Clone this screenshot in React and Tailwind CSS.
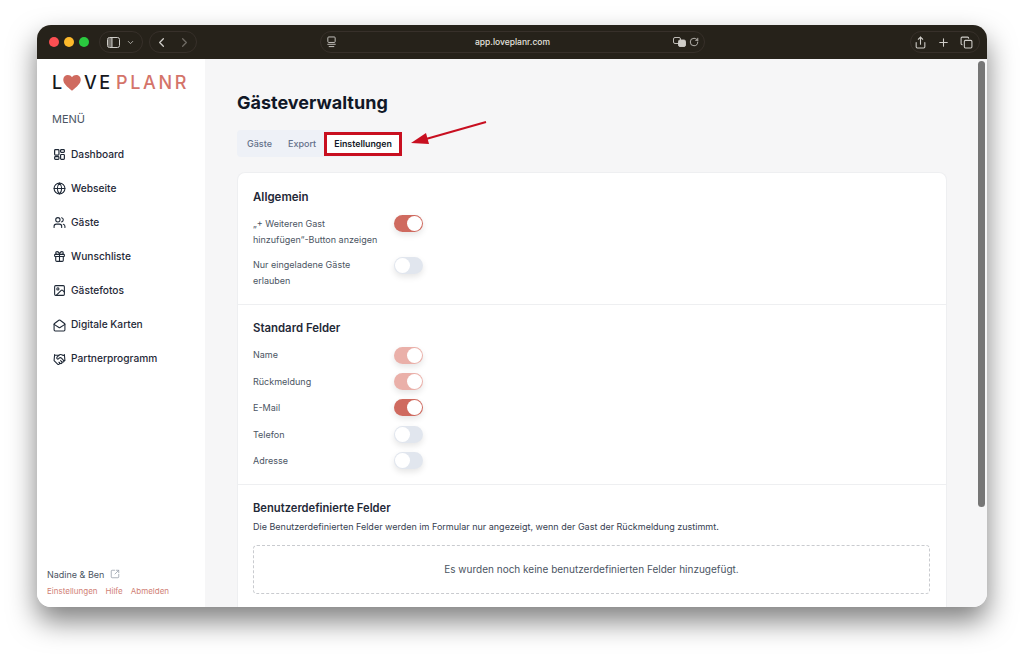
import { Globe, Users, Gift, Image, MailOpen, Handshake, ChevronDown, ChevronLeft, ChevronRight, Share, Plus, Copy, RotateCw, SquareArrowOutUpRight } from 'lucide-react';

function DashIcon() {
  return (
    <svg width="13" height="13" viewBox="0 0 24 24" fill="none" stroke="currentColor" strokeWidth="2.2">
      <rect x="3" y="3" width="8" height="10" rx="1.5" />
      <rect x="14" y="3" width="7" height="5" rx="1.5" />
      <rect x="14" y="12" width="7" height="9" rx="1.5" />
      <rect x="3" y="16" width="8" height="5" rx="1.5" />
    </svg>
  );
}

function SidebarIcon() {
  return (
    <svg width="13" height="11" viewBox="0 0 13 11" fill="none" stroke="currentColor" strokeWidth="1">
      <rect x="0.5" y="0.5" width="12" height="10" rx="2" />
      <path d="M1 2.500Q1 1 2.500 1H5V10H2.500Q1 10 1 8.500Z" fill="currentColor" fillOpacity="0.45" stroke="none" />
      <path d="M5 0.500V10.500" />
    </svg>
  );
}

function TranslateIcon() {
  return (
    <svg width="13" height="11" viewBox="0 0 13 11" fill="none" stroke="currentColor" strokeWidth="0.9">
      <rect x="0.500" y="0.500" width="7" height="6" rx="1.500" />
      <rect x="5.500" y="3" width="7" height="6.500" rx="1.500" fill="currentColor" />
    </svg>
  );
}

const menu = [
  { label: 'Dashboard', icon: <DashIcon /> },
  { label: 'Webseite', icon: <Globe size={13} /> },
  { label: 'Gäste', icon: <Users size={13} /> },
  { label: 'Wunschliste', icon: <Gift size={13} /> },
  { label: 'Gästefotos', icon: <Image size={13} /> },
  { label: 'Digitale Karten', icon: <MailOpen size={13} /> },
  { label: 'Partnerprogramm', icon: <Handshake size={13} /> },
];

function Toggle({ state, className = '' }) {
  const bg = state === 'on' ? 'bg-[#cf6a5f] justify-end' : state === 'locked' ? 'bg-[#eab0a9] justify-end' : 'bg-[#e1e6ee] justify-start';
  return (
    <div className={`w-[29px] h-[17px] rounded-full flex items-center px-px shadow-[0_3px_6px_rgba(0,0,0,0.1)] ${bg} ${className}`}>
      <div className="w-[15px] h-[15px] rounded-full bg-white" />
    </div>
  );
}

function Field({ label, state }) {
  return (
    <div className="flex items-center h-[26.4px]">
      <span className="w-[141px] text-[9px] text-[#4b5563]">{label}</span>
      <Toggle state={state} />
    </div>
  );
}

export default function App() {
  return (
    <div className="w-[1024px] h-[656px] bg-white pl-[37px] pt-[25px] overflow-hidden font-['Inter',sans-serif]">
      <div className="relative w-[950px] h-[582px] rounded-[14px] overflow-hidden flex flex-col shadow-[0_14px_28px_rgba(0,0,0,0.5)]">
        {/* safari toolbar */}
        <div className="h-[34px] shrink-0 bg-[#26221a] flex items-center text-[#cfcdc8] pl-[12px] pr-[7px]">
          <div className="flex gap-[5px]">
            <span className="w-[10px] h-[10px] rounded-full bg-[#fc4f52]" />
            <span className="w-[10px] h-[10px] rounded-full bg-[#fdb92b]" />
            <span className="w-[10px] h-[10px] rounded-full bg-[#2ac93f]" />
          </div>
          <div className="ml-[10px] w-[44px] h-[22px] rounded-full border border-[#37302a] flex items-center justify-center gap-[6px]">
            <SidebarIcon />
            <ChevronDown size={9} />
          </div>
          <div className="ml-[6px] w-[48px] h-[22px] rounded-full border border-[#37302a] flex items-center justify-center gap-[8px]">
            <ChevronLeft size={15} />
            <ChevronRight size={15} className="text-[#6e6a63]" />
          </div>
          <div className="ml-[123px] w-[385px] h-[22px] rounded-full border border-[#37302a] flex items-center px-[5px]">
            <span className="w-[40px]">
              <svg width="11" height="12" viewBox="0 0 12 13" fill="none" stroke="currentColor" strokeWidth="1"><rect x="2" y="1" width="8" height="6" rx="1" /><path d="M1.500 9h9M3 11.500h6" /></svg>
            </span>
            <span className="flex-1 text-center text-[8.500px] font-medium text-[#e5e3df]">app.loveplanr.com</span>
            <span className="w-[40px] flex items-center justify-end gap-[3px]"><TranslateIcon /><RotateCw size={10} /></span>
          </div>
          <div className="ml-auto w-[70px] h-[22px] rounded-full border border-[#37302a] flex items-center justify-center gap-[10px] pr-[3px]">
            <Share size={13} />
            <Plus size={13} />
            <Copy size={13} />
          </div>
        </div>

        <div className="flex flex-1 min-h-0">
          {/* sidebar */}
          <aside className="w-[168px] shrink-0 bg-white flex flex-col pl-[15px]">
            <div className="mt-[14px] h-[20px] flex items-center text-[18px] font-medium tracking-[0.15em] leading-none">
              <span className="text-[#16181d]">L</span>
              <svg width="18" height="16" viewBox="0 0 24 22" className="-ml-[2px] mr-[3px]"><path fill="#cf6a5f" d="M12 21.500C5 16 0 11.500 0 6.500 0 2.800 2.800 0 6.300 0 8.600 0 10.800 1.200 12 3.200 13.200 1.200 15.400 0 17.700 0 21.200 0 24 2.800 24 6.500 24 11.500 19 16 12 21.500Z" /></svg>
              <span className="text-[#16181d]">VE</span>
              <span className="text-[#d4746a] ml-[3px]">PLANR</span>
            </div>
            <div className="mt-[18px] text-[11px] text-[#4b5563]">MENÜ</div>
            <nav className="mt-[10px] flex flex-col">
              {menu.map(m => (
                <div key={m.label} className="h-[34.1px] flex items-center gap-[5px] text-[10.200px] text-[#1f2937] font-medium">
                  <span className="w-[14px] flex justify-center">{m.icon}</span>
                  {m.label}
                </div>
              ))}
            </nav>
            <div className="mt-auto mb-[10px] -ml-[5px]">
              <div className="flex items-center gap-[6px] text-[9px] text-[#4b5563]">
                Nadine & Ben <SquareArrowOutUpRight size={10} className="text-[#9ca3af]" />
              </div>
              <div className="mt-[4px] flex gap-[8px] text-[8px] text-[#d07f76]">
                <span>Einstellungen</span><span>Hilfe</span><span>Abmelden</span>
              </div>
            </div>
          </aside>

          {/* main */}
          <main className="relative flex-1 bg-[#f6f6f7] pl-[32px] pr-[40px] overflow-hidden">
            <h1 className="mt-[32px] text-[18px] leading-[24px] font-bold text-[#111827]">Gästeverwaltung</h1>
            <div className="mt-[15px] w-fit h-[27px] bg-[#eef1f7] rounded-[4px] flex items-center text-[9px] font-medium">
              <span className="pl-[10px] pr-[10px] text-[#64708a]">Gäste</span>
              <span className="px-[6px] text-[#64708a]">Export</span>
              <span className="ml-[2px] w-[78px] h-[24px] flex items-center justify-center bg-white font-semibold text-[8.800px] text-[#111827] border-[3px] border-[#c80f20]">Einstellungen</span>
            </div>
            <div className="mt-[15px] bg-white rounded-t-[8px] border border-[#eeeff1] border-b-0">
              <section className="px-[15px] pt-[16px] pb-[15px] border-b border-[#eeeff1]">
                <h2 className="text-[11.500px] leading-[16px] font-semibold text-[#1f2937]">Allgemein</h2>
                <div className="mt-[11px] flex items-start">
                  <span className="w-[141px] text-[9px] leading-[16px] text-[#4b5563] pr-[12px]">„+ Weiteren Gast<br />hinzufügen“-Button anzeigen</span>
                  <Toggle state="on" className="-mt-px" />
                </div>
                <div className="mt-[9px] flex items-start">
                  <span className="w-[141px] text-[9px] leading-[16px] text-[#4b5563] pr-[30px]">Nur eingeladene Gäste erlauben</span>
                  <Toggle state="off" />
                </div>
              </section>
              <section className="px-[15px] pt-[15px] pb-[10px] border-b border-[#eeeff1]">
                <h2 className="text-[11.400px] leading-[16px] font-semibold text-[#1f2937] mb-[6px]">Standard Felder</h2>
                <Field label="Name" state="locked" />
                <Field label="Rückmeldung" state="locked" />
                <Field label="E-Mail" state="on" />
                <Field label="Telefon" state="off" />
                <Field label="Adresse" state="off" />
              </section>
              <section className="pl-[15px] pr-[16px] pt-[15px] pb-[20px]">
                <h2 className="text-[11.200px] leading-[16px] font-semibold text-[#1f2937]">Benutzerdefinierte Felder</h2>
                <p className="mt-[4px] text-[9px] leading-[14px] text-[#374151]">Die Benutzerdefinierten Felder werden im Formular nur angezeigt, wenn der Gast der Rückmeldung zustimmt.</p>
                <div className="mt-[11px] h-[49px] rounded-[4px] border border-dashed border-[#c9cbcf] flex items-center justify-center text-[10px] text-[#4b5563]">
                  Es wurden noch keine benutzerdefinierten Felder hinzugefügt.
                </div>
              </section>
            </div>
            {/* arrow annotation */}
            <svg className="absolute left-[205px] top-[60px]" width="78" height="30" viewBox="0 0 78 30">
              <path d="M76 3L16 20" stroke="#c80f20" strokeWidth="2" />
              <path d="M1 24L16 14L19 25Z" fill="#c80f20" />
            </svg>
            {/* scrollbar */}
            <div className="absolute right-[2px] top-[2px] w-[7px] h-[446px] rounded-full bg-[#767676]" />
          </main>
        </div>
      </div>
    </div>
  );
}
